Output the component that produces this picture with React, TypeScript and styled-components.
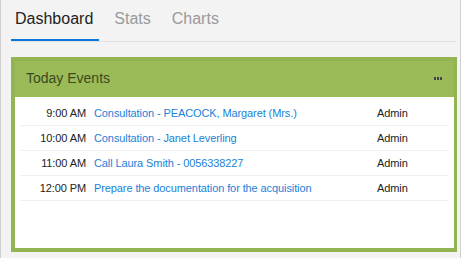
import React from 'react';
import styled, { createGlobalStyle } from 'styled-components';

const GlobalStyle = createGlobalStyle`
    html, body {
        margin: 0;
        padding: 0;
        background: #ffffff;
    }
    body {
        font-family: "Liberation Sans", Arial, sans-serif;
    }
`;

const tabs = [
    { label: 'Dashboard', active: true },
    { label: 'Stats', active: false },
    { label: 'Charts', active: false },
];

const events = [
    { time: '9:00 AM', subject: 'Consultation - PEACOCK, Margaret (Mrs.)', owner: 'Admin' },
    { time: '10:00 AM', subject: 'Consultation - Janet Leverling', owner: 'Admin' },
    { time: '11:00 AM', subject: 'Call Laura Smith - 0056338227', owner: 'Admin' },
    { time: '12:00 PM', subject: 'Prepare the documentation for the acquisition', owner: 'Admin' },
];

const App = () => (
    <>
        <GlobalStyle />
        <Page>
            <TabStrip>
                {tabs.map((tab) => (
                    <Tab key={tab.label} $active={tab.active}>
                        {tab.label}
                    </Tab>
                ))}
            </TabStrip>
            <Panel>
                <PanelHeader>
                    <PanelTitle>Today Events</PanelTitle>
                    <MoreButton>
                        <Dot />
                        <Dot />
                        <Dot />
                    </MoreButton>
                </PanelHeader>
                <PanelBody>
                    {events.map((item) => (
                        <EventRow key={item.time}>
                            <Time>{item.time}</Time>
                            <Subject>{item.subject}</Subject>
                            <Owner>{item.owner}</Owner>
                        </EventRow>
                    ))}
                </PanelBody>
            </Panel>
        </Page>
    </>
);

const Page = styled.div`
    width: 461px;
    height: 258px;
    box-sizing: border-box;
    background: #f3f3f3;
    border-left: 1px solid #cfcfcf;
    border-right: 1px solid #cfcfcf;
    padding: 0 4px 0 10px;
`;

const TabStrip = styled.div`
    display: flex;
    gap: 11px;
    height: 41px;
    border-bottom: 1px solid #e2e2e2;
`;

const Tab = styled.div<{ $active: boolean }>`
    display: flex;
    align-items: center;
    box-sizing: border-box;
    height: 41px;
    padding: 0 6px 2px 4px;
    font-size: 16px;
    color: ${({ $active }) => ($active ? '#222222' : '#9a9a9a')};
    border-bottom: 2px solid ${({ $active }) => ($active ? '#0a78d7' : 'transparent')};
`;

const Panel = styled.div`
    margin-top: 15px;
    width: 446px;
    height: 195px;
    box-sizing: border-box;
    border: 4px solid #93b551;
    box-shadow: inset -1px -1px 0 #86a747;
    display: flex;
    flex-direction: column;
`;

const PanelHeader = styled.div`
    display: flex;
    align-items: center;
    justify-content: space-between;
    height: 34px;
    padding: 0 11px 2px 11px;
    background: #9bbb59;
`;

const PanelTitle = styled.div`
    font-size: 14px;
    color: #3b4a1d;
`;

const MoreButton = styled.div`
    display: flex;
    gap: 1px;
`;

const Dot = styled.span`
    width: 2px;
    height: 3px;
    background: #444;
`;

const PanelBody = styled.div`
    flex: 1;
    background: #ffffff;
    padding: 4px 5px 0 5px;
    margin-right: -1px;
`;

const EventRow = styled.div`
    display: flex;
    align-items: center;
    height: 24px;
    border-bottom: 1px solid #efefef;
    font-size: 11px;
    letter-spacing: -0.1px;
`;

const Time = styled.div`
    width: 66px;
    text-align: right;
    color: #222222;
`;

const Subject = styled.div`
    width: 283px;
    margin-left: 8px;
    color: #1a7fd8;
`;

const Owner = styled.div`
    color: #222222;
`;

export default App;
